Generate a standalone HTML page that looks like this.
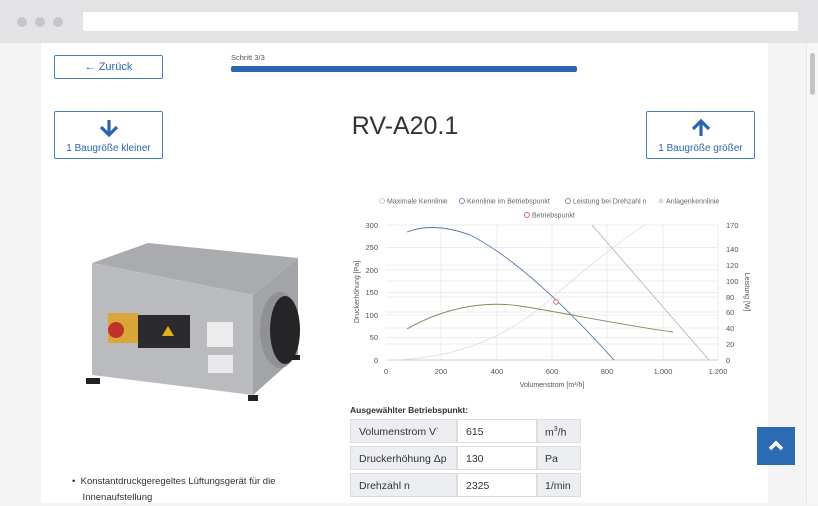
<!DOCTYPE html>
<html><head><meta charset="utf-8"><style>
*{margin:0;padding:0;box-sizing:border-box}
body{width:818px;height:503px;overflow:hidden;background:#f4f4f5;font-family:"Liberation Sans",sans-serif;position:relative;color:#333}
.a{position:absolute}
.btn{position:absolute;border:1px solid #4a80be;border-radius:2px;background:#fff;color:#2a66ad;font-size:10px;text-align:center}
</style></head><body>
<div class="a" style="left:0;top:0;width:818px;height:43px;background:#e3e3e5"></div>
<div class="a" style="left:17px;top:17px;width:10px;height:10px;border-radius:50%;background:#c6c6c8"></div>
<div class="a" style="left:35px;top:17px;width:10px;height:10px;border-radius:50%;background:#c6c6c8"></div>
<div class="a" style="left:53px;top:17px;width:10px;height:10px;border-radius:50%;background:#c6c6c8"></div>
<div class="a" style="left:83px;top:12px;width:715px;height:19px;border-radius:2px;background:#fff"></div>
<div class="a" style="left:41px;top:43px;width:727px;height:460px;background:#fff"></div>
<div class="a" style="left:806px;top:43px;width:12px;height:460px;background:#f7f7f7;border-left:1px solid #e6e6e6"></div>
<div class="a" style="left:810px;top:53px;width:5px;height:42px;border-radius:3px;background:#c3c3c3"></div>

<div class="btn" style="left:54px;top:55px;width:109px;height:24px;line-height:22px;font-size:11px">← Zurück</div>
<div class="a" style="left:231px;top:53px;font-size:7.5px;color:#555">Schritt 3/3</div>
<div class="a" style="left:231px;top:66px;width:346px;height:6px;border-radius:2px;background:#2a66ad"></div>

<div class="btn" style="left:54px;top:111px;width:109px;height:48px">
<svg width="22" height="20" viewBox="0 0 22 20" style="margin-top:6px"><path d="M11 2V16M3 9L11 17L19 9" stroke="#2a66ad" stroke-width="3.2" fill="none"/></svg>
<div style="margin-top:2px">1 Baugröße kleiner</div></div>
<div class="btn" style="left:646px;top:111px;width:109px;height:48px">
<svg width="22" height="20" viewBox="0 0 22 20" style="margin-top:6px"><path d="M11 18V4M3 11L11 3L19 11" stroke="#2a66ad" stroke-width="3.2" fill="none"/></svg>
<div style="margin-top:2px">1 Baugröße größer</div></div>
<div class="a" style="left:300px;top:112px;width:210px;text-align:center;font-size:25px;color:#333">RV-A20.1</div>

<svg class="a" style="left:80px;top:238px" width="225" height="165" viewBox="0 0 225 165">
<polygon points="12,25 68,5 218,20 173,57" fill="#a9abae"/>
<polygon points="12,25 173,57 173,157 12,137" fill="#b9bbbe"/>
<polygon points="173,57 218,20 218,117 173,157" fill="#a2a4a7"/>
<ellipse cx="200" cy="92" rx="20" ry="38" fill="#8f9195"/>
<ellipse cx="205" cy="92" rx="15" ry="34" fill="#252527"/>
<rect x="28" y="75" width="30" height="30" fill="#d9a63a"/>
<circle cx="36" cy="92" r="8" fill="#c4302a"/>
<rect x="58" y="77" width="52" height="33" fill="#2b2b2d"/>
<polygon points="82,98 88,88 94,98" fill="#e3b020"/>
<rect x="127" y="84" width="26" height="25" fill="#ececec"/>
<rect x="128" y="117" width="25" height="18" fill="#e8e8ea"/>
<rect x="6" y="140" width="14" height="6" fill="#222"/>
<rect x="168" y="157" width="10" height="6" fill="#222"/>
<rect x="210" y="117" width="10" height="5" fill="#222"/>
</svg>

<div class="a" style="left:72px;top:474px;font-size:9.5px;line-height:16px;color:#333">•&nbsp;&nbsp;Konstantdruckgeregeltes Lüftungsgerät für die<br>&nbsp;&nbsp;&nbsp;&nbsp;Innenaufstellung</div>

<svg class="a" style="left:340px;top:190px" width="420" height="210" viewBox="340 190 420 210" font-family="Liberation Sans" font-size="7.5" fill="#555">
<g font-size="7" fill="#666">
<circle cx="382" cy="201" r="2.5" fill="none" stroke="#ccc"/><text x="387" y="203.5">Maximale Kennlinie</text>
<circle cx="462" cy="201" r="2.5" fill="none" stroke="#7b8fb8"/><text x="467" y="203.5">Kennlinie im Betriebspunkt</text>
<circle cx="568" cy="201" r="2.5" fill="none" stroke="#8a9470"/><text x="573" y="203.5">Leistung bei Drehzahl n</text>
<circle cx="661" cy="201" r="2.5" fill="#ddd"/><text x="666" y="203.5">Anlagenkennlinie</text>
<circle cx="527" cy="215" r="2.5" fill="none" stroke="#c66"/><text x="532" y="217.5">Betriebspunkt</text>
</g>
<g stroke="#e6e6e6" stroke-width="0.7">
<line x1="386" y1="225" x2="718" y2="225"/><line x1="386" y1="247.5" x2="718" y2="247.5"/><line x1="386" y1="270" x2="718" y2="270"/><line x1="386" y1="292.5" x2="718" y2="292.5"/><line x1="386" y1="315" x2="718" y2="315"/><line x1="386" y1="337.5" x2="718" y2="337.5"/>
<line x1="386" y1="265" x2="718" y2="265"/><line x1="386" y1="281" x2="718" y2="281"/><line x1="386" y1="297" x2="718" y2="297"/><line x1="386" y1="312" x2="718" y2="312"/><line x1="386" y1="328" x2="718" y2="328"/><line x1="386" y1="344" x2="718" y2="344"/>
<line x1="441" y1="225" x2="441" y2="360"/><line x1="497" y1="225" x2="497" y2="360"/><line x1="552" y1="225" x2="552" y2="360"/><line x1="607" y1="225" x2="607" y2="360"/><line x1="663" y1="225" x2="663" y2="360"/><line x1="718" y1="225" x2="718" y2="360"/>
</g>
<line x1="386" y1="360" x2="718" y2="360" stroke="#bbb" stroke-width="0.8"/>
<path d="M386 360 Q480 360 547 302 T645 225" stroke="#ddd" fill="none" stroke-width="0.8"/>
<line x1="592" y1="225" x2="709" y2="360" stroke="#aab2c4" stroke-width="0.8"/>
<path d="M407 232 C420 227 440 224 470 235 C510 255 560 300 614 360" stroke="#5a78a8" fill="none" stroke-width="0.9"/>
<path d="M407 329 C440 310 480 300 520 306 C560 312 620 325 673 332" stroke="#7f8a5c" fill="none" stroke-width="0.9"/>
<circle cx="556" cy="302" r="2.3" fill="#fff" stroke="#c55" stroke-width="0.8"/>
<g text-anchor="end"><text x="378" y="228">300</text><text x="378" y="250">250</text><text x="378" y="273">200</text><text x="378" y="295">150</text><text x="378" y="318">100</text><text x="378" y="340">50</text><text x="378" y="363">0</text></g>
<g><text x="726" y="228">170</text><text x="726" y="252">140</text><text x="726" y="268">120</text><text x="726" y="284">100</text><text x="726" y="300">80</text><text x="726" y="315">60</text><text x="726" y="331">40</text><text x="726" y="347">20</text><text x="726" y="363">0</text></g>
<g text-anchor="middle"><text x="386" y="374">0</text><text x="441" y="374">200</text><text x="497" y="374">400</text><text x="552" y="374">600</text><text x="607" y="374">800</text><text x="663" y="374">1.000</text><text x="718" y="374">1.200</text>
<text x="552" y="387" font-size="7">Volumenstrom [m³/h]</text></g>
<text transform="translate(359 292) rotate(-90)" text-anchor="middle" font-size="7">Druckerhöhung [Pa]</text>
<text transform="translate(745 292) rotate(90)" text-anchor="middle" font-size="7">Leistung [W]</text>
</svg>

<div class="a" style="left:350px;top:405px;font-size:8.5px;font-weight:bold;color:#333">Ausgewählter Betriebspunkt:</div>
<div class="a" style="left:350px;top:419px;font-size:10.5px;color:#333">
<div style="position:relative;height:27px">
<div class="a" style="left:0;top:0;width:107px;height:24px;background:#eceef1;border:1px solid #ddd;padding:6px 8px">Volumenstrom V˙</div>
<div class="a" style="left:107px;top:0;width:80px;height:24px;background:#fff;border:1px solid #ddd;padding:6px 8px">615</div>
<div class="a" style="left:187px;top:0;width:44px;height:24px;background:#eceef1;border:1px solid #ddd;padding:6px 7px">m<sup style="font-size:7px">3</sup>/h</div></div>
<div style="position:relative;height:27px">
<div class="a" style="left:0;top:0;width:107px;height:24px;background:#eceef1;border:1px solid #ddd;padding:6px 8px">Druckerhöhung Δp</div>
<div class="a" style="left:107px;top:0;width:80px;height:24px;background:#fff;border:1px solid #ddd;padding:6px 8px">130</div>
<div class="a" style="left:187px;top:0;width:44px;height:24px;background:#eceef1;border:1px solid #ddd;padding:6px 7px">Pa</div></div>
<div style="position:relative;height:27px">
<div class="a" style="left:0;top:0;width:107px;height:24px;background:#eceef1;border:1px solid #ddd;padding:6px 8px">Drehzahl n</div>
<div class="a" style="left:107px;top:0;width:80px;height:24px;background:#fff;border:1px solid #ddd;padding:6px 8px">2325</div>
<div class="a" style="left:187px;top:0;width:44px;height:24px;background:#eceef1;border:1px solid #ddd;padding:6px 7px">1/min</div></div>
</div>

<div class="a" style="left:757px;top:427px;width:38px;height:38px;background:#2a6bb3"></div>
<svg class="a" style="left:757px;top:427px" width="38" height="38"><path d="M13 22L19 16L25 22" stroke="#fff" stroke-width="3.5" fill="none"/></svg>
</body></html>
